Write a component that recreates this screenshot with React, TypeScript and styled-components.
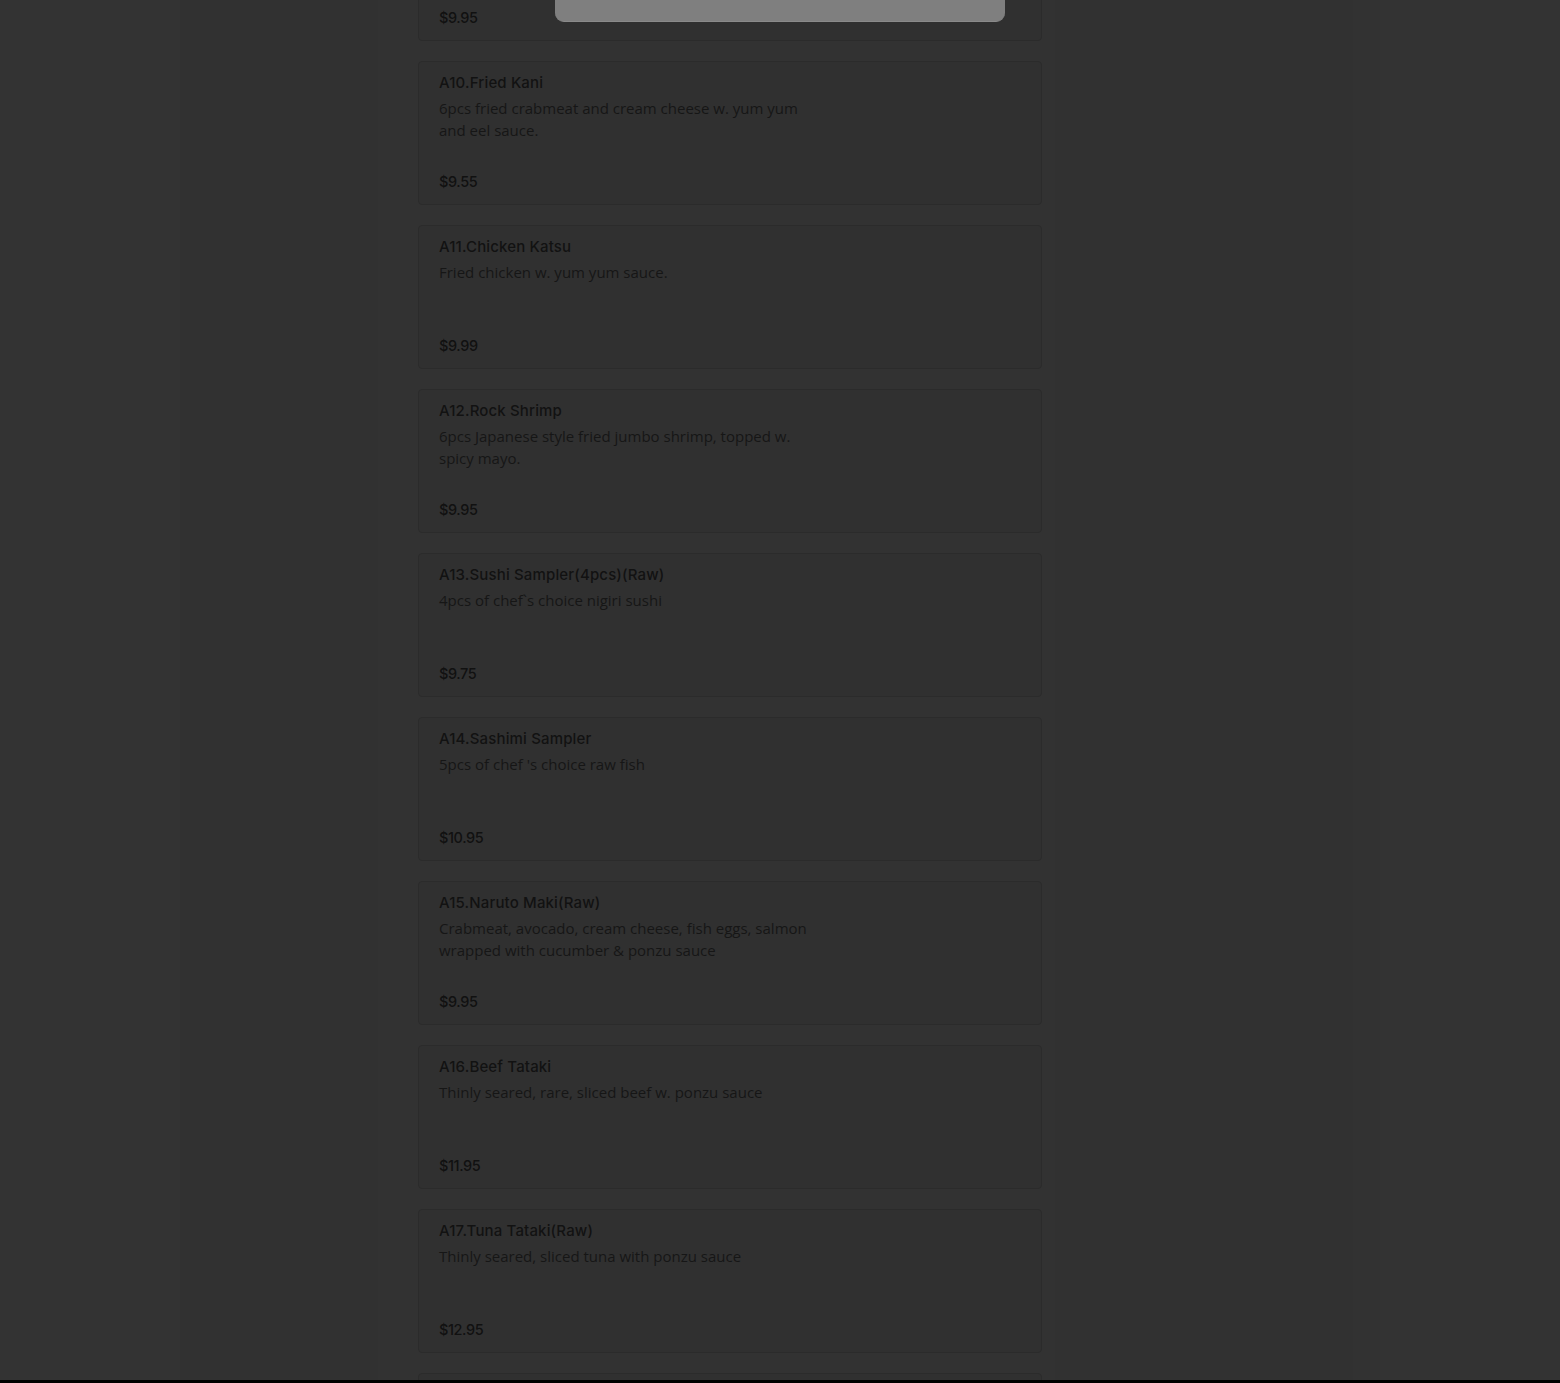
import React from "react";
import styled, { createGlobalStyle } from "styled-components";

const Global = createGlobalStyle`
  html, body { margin: 0; padding: 0; background: #000; }
  body { font-family: "Open Sans", "Liberation Sans", sans-serif; }
`;

const Viewport = styled.div`
  position: relative;
  height: 1380px;
  overflow: hidden;
  background: #333333;
`;

const Container = styled.div`
  width: 1200px;
  margin: 0 auto;
  height: 100%;
  display: grid;
  grid-template-columns: 198px 40px 624px 13px 298px 27px;
  background: #323232;
`;

const SideColumn = styled.div`
  background: #313131;
`;

const Spacer = styled.div``;

const MenuList = styled.div`
  display: flex;
  flex-direction: column;
  gap: 20px;
  margin-top: -103px;
`;

const Card = styled.div`
  box-sizing: border-box;
  height: 144px;
  border: 1px solid #2b2b2b;
  border-radius: 4px;
  background: #303030;
  padding: 11px 20px 12px;
  display: flex;
  flex-direction: column;
`;

const Title = styled.div`
  font-family: Inter, "Liberation Sans", sans-serif;
  font-weight: 500;
  font-size: 15px;
  line-height: 20px;
  color: #121212;
  letter-spacing: 0.15px;
`;

const Description = styled.div`
  margin-top: 4px;
  max-width: 372px;
  min-height: 44px;
  font-family: "Open Sans", "Liberation Sans", sans-serif;
  font-size: 15px;
  line-height: 22px;
  color: #161616;
`;

const Price = styled.div`
  margin-top: auto;
  font-family: Inter, "Liberation Sans", sans-serif;
  font-weight: 500;
  font-size: 14.5px;
  line-height: 20px;
  color: #111111;
  letter-spacing: -0.4px;
`;

const ModalEdge = styled.div`
  position: absolute;
  top: 0;
  left: 555px;
  width: 450px;
  height: 22px;
  background: #7f7f7f;
  border-bottom: 1px solid #8a8a8a;
  box-sizing: border-box;
  border-radius: 0 0 9px 9px;
`;

type Item = { title: string; desc: string; price: string };

const items: Item[] = [
  { title: "A9.Spicy Tuna Crispy Rice", desc: "", price: "$9.95" },
  {
    title: "A10.Fried Kani",
    desc: "6pcs fried crabmeat and cream cheese w. yum yum and eel sauce.",
    price: "$9.55",
  },
  { title: "A11.Chicken Katsu", desc: "Fried chicken w. yum yum sauce.", price: "$9.99" },
  {
    title: "A12.Rock Shrimp",
    desc: "6pcs Japanese style fried jumbo shrimp, topped w. spicy mayo.",
    price: "$9.95",
  },
  {
    title: "A13.Sushi Sampler(4pcs)(Raw)",
    desc: "4pcs of chef`s choice nigiri sushi",
    price: "$9.75",
  },
  { title: "A14.Sashimi Sampler", desc: "5pcs of chef 's choice raw fish", price: "$10.95" },
  {
    title: "A15.Naruto Maki(Raw)",
    desc: "Crabmeat, avocado, cream cheese, fish eggs, salmon wrapped with cucumber & ponzu sauce",
    price: "$9.95",
  },
  {
    title: "A16.Beef Tataki",
    desc: "Thinly seared, rare, sliced beef w. ponzu sauce",
    price: "$11.95",
  },
  {
    title: "A17.Tuna Tataki(Raw)",
    desc: "Thinly seared, sliced tuna with ponzu sauce",
    price: "$12.95",
  },
  { title: "A18.Salmon Tataki(Raw)", desc: "Thinly seared, sliced salmon with ponzu sauce", price: "$12.95" },
];

export default function App() {
  return (
    <>
      <Global />
      <Viewport>
        <Container>
          <SideColumn />
          <Spacer />
          <MenuList>
            {items.map((it) => (
              <Card key={it.title}>
                <Title>{it.title}</Title>
                <Description>{it.desc}</Description>
                <Price>{it.price}</Price>
              </Card>
            ))}
          </MenuList>
          <Spacer />
          <SideColumn />
          <Spacer />
        </Container>
        <ModalEdge />
      </Viewport>
    </>
  );
}
